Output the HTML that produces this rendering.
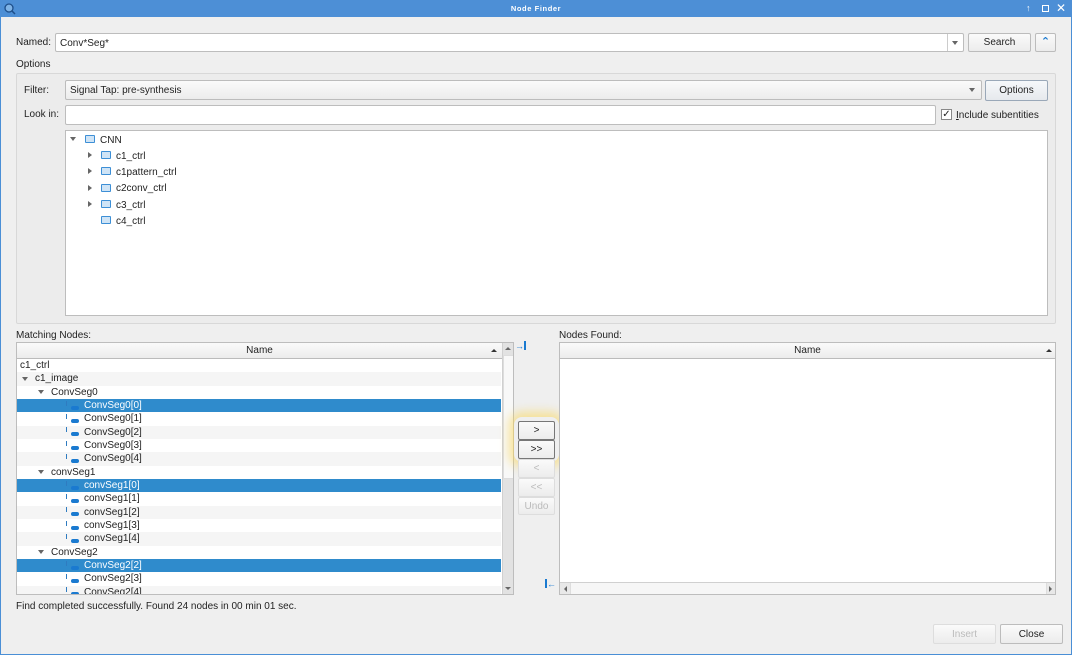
<!DOCTYPE html>
<html><head><meta charset="utf-8"><style>
*{box-sizing:border-box;margin:0;padding:0}
body{width:1072px;height:655px;overflow:hidden;background:#efefef;font-family:"Liberation Sans","DejaVu Sans",sans-serif;font-size:10px;color:#222;position:relative}
.a{position:absolute}
.win{left:0;top:0;width:1072px;height:655px;border:1px solid #4a8fd6;border-top:none}
.title{left:0;top:0;width:1072px;height:17px;background:#4d8fd6;color:#fff;font-size:7.5px;text-align:center;line-height:17px;letter-spacing:.6px;font-weight:bold}
.inp{background:#fff;border:1px solid #bdbdbd;border-radius:2px}
.btn{background:linear-gradient(#fafafa,#ececec);border:1px solid #bcbcbc;border-radius:2px;text-align:center;font-size:10px}
.lbl{white-space:nowrap}
.row{position:absolute;left:1px;width:484px;height:13.3px;line-height:14px;white-space:nowrap;font-size:10px}
.alt{background:#f5f5f5}
.sel{background:#2f8bcc;color:#fff}
.tri{position:absolute;width:0;height:0;border-left:3px solid transparent;border-right:3px solid transparent;border-top:4px solid #666}
.trr{position:absolute;width:0;height:0;border-top:3px solid transparent;border-bottom:3px solid transparent;border-left:4px solid #666}
.ico{position:absolute;width:10px;height:8px;border:1.5px solid #3d8fd6;background:#cfe4f6;border-radius:1px}
.ni{position:absolute}
.ni:before{content:"";position:absolute;left:0;top:0;width:1px;height:5px;background:#2f7bc0}
.ni:after{content:"";position:absolute;left:5px;top:5px;width:8px;height:4px;border-radius:2px;background:#1a7ad0}
</style></head><body>
<div class="a win"></div>
<div class="a title">Node Finder</div>
<svg class="a" style="left:3px;top:2px" width="14" height="13"><circle cx="6" cy="6" r="4" fill="#7fb3e6" stroke="#1e4f8a" stroke-width="1.3"/><line x1="9" y1="9" x2="12" y2="12" stroke="#1e4f8a" stroke-width="1.5"/></svg>
<div class="a" style="left:1026px;top:3px;color:#fff;font-size:9px;font-weight:bold">&#x2191;</div>
<div class="a" style="left:1042px;top:5px;width:7px;height:7px;border:1.5px solid #fff"></div>
<div class="a" style="left:1056px;top:1px;color:#fff;font-size:12px;font-weight:bold">&#x2715;</div>

<div class="a lbl" style="left:16px;top:37px">Named:</div>
<div class="a inp" style="left:55px;top:33px;width:909px;height:19px;padding:4px 4px">Conv*Seg*</div>
<div class="a" style="left:947px;top:34px;width:1px;height:17px;background:#ccc"></div>
<div class="a tri" style="left:952px;top:41px"></div>
<div class="a btn" style="left:968px;top:33px;width:63px;height:19px;line-height:18px">Search</div>
<div class="a btn" style="left:1035px;top:33px;width:21px;height:19px;color:#1a7ad0;font-weight:bold;font-size:11px;line-height:17px">&#x2303;</div>
<div class="a lbl" style="left:16px;top:59px">Options</div>

<div class="a" style="left:16px;top:73px;width:1040px;height:251px;border:1px solid #d8d8d8;border-radius:2px;background:#ececec"></div>
<div class="a lbl" style="left:24px;top:85px">Filter:</div>
<div class="a btn" style="left:65px;top:80px;width:917px;height:20px;text-align:left;padding:4px 4px">Signal Tap: pre-synthesis</div>
<div class="a tri" style="left:969px;top:88px"></div>
<div class="a btn" style="left:985px;top:80px;width:63px;height:21px;line-height:20px;border-color:#9aa8b8;background:linear-gradient(#f6f8fa,#e6e9ed)">Options</div>
<div class="a lbl" style="left:24px;top:109px">Look in:</div>
<div class="a inp" style="left:65px;top:105px;width:871px;height:20px"></div>
<div class="a" style="left:941px;top:109px;width:11px;height:11px;border:1px solid #888;background:#fff;font-size:10px;line-height:9px;text-align:center;font-weight:bold">&#x2713;</div>
<div class="a lbl" style="left:956px;top:110px"><u>I</u>nclude subentities</div>

<div class="a inp" style="left:65px;top:130px;width:983px;height:186px;border-radius:0"></div>
<div class="a tri" style="left:70px;top:137px"></div>
<div class="a ico" style="left:85px;top:135px"></div>
<div class="a lbl" style="left:100px;top:135px">CNN</div>
<div class="a trr" style="left:88px;top:152px"></div><div class="a ico" style="left:101px;top:151px"></div><div class="a lbl" style="left:116px;top:151px">c1_ctrl</div>
<div class="a trr" style="left:88px;top:168px"></div><div class="a ico" style="left:101px;top:167px"></div><div class="a lbl" style="left:116px;top:167px">c1pattern_ctrl</div>
<div class="a trr" style="left:88px;top:185px"></div><div class="a ico" style="left:101px;top:184px"></div><div class="a lbl" style="left:116px;top:183px">c2conv_ctrl</div>
<div class="a trr" style="left:88px;top:201px"></div><div class="a ico" style="left:101px;top:200px"></div><div class="a lbl" style="left:116px;top:200px">c3_ctrl</div>
<div class="a ico" style="left:101px;top:216px"></div><div class="a lbl" style="left:116px;top:216px">c4_ctrl</div>

<div class="a lbl" style="left:16px;top:330px">Matching Nodes:</div>
<div class="a" style="left:16px;top:342px;width:498px;height:253px;border:1px solid #bdbdbd;background:#fff;overflow:hidden">
 <div class="a" style="left:0;top:0;width:485px;height:16px;background:linear-gradient(#fafafa,#ececec);border-bottom:1px solid #bbb;text-align:center;line-height:16px">Name</div>
 <div class="a" style="left:474px;top:6px;border-left:3px solid transparent;border-right:3px solid transparent;border-bottom:3px solid #333"></div>
 <div class="a" style="left:485px;top:0;width:12px;height:252px;background:#e2e2e2;border-left:1px solid #d0d0d0"></div>
 <div class="a" style="left:486px;top:12px;width:11px;height:124px;background:#f8f8f8;border:1px solid #ddd"></div>
 <div class="a" style="left:488px;top:4px;border-left:3px solid transparent;border-right:3px solid transparent;border-bottom:3px solid #666"></div>
 <div class="a" style="left:488px;top:244px;border-left:3px solid transparent;border-right:3px solid transparent;border-top:3px solid #666"></div>
 <div class="row" style="top:16px;left:0;padding-left:3px">c1_ctrl</div>
 <div class="row alt" style="top:29.3px;left:0;padding-left:18px">c1_image</div><div class="tri" style="left:5px;top:34px"></div>
 <div class="row" style="top:42.6px;left:0;padding-left:34px">ConvSeg0</div><div class="tri" style="left:21px;top:47px"></div>
 <div class="row sel" style="top:56px;left:0;padding-left:67px">ConvSeg0[0]</div><div class="ni" style="left:49px;top:58px"></div>
 <div class="row" style="top:69.3px;left:0;padding-left:67px">ConvSeg0[1]</div><div class="ni" style="left:49px;top:71px"></div>
 <div class="row alt" style="top:82.6px;left:0;padding-left:67px">ConvSeg0[2]</div><div class="ni" style="left:49px;top:84px"></div>
 <div class="row" style="top:96px;left:0;padding-left:67px">ConvSeg0[3]</div><div class="ni" style="left:49px;top:98px"></div>
 <div class="row alt" style="top:109.3px;left:0;padding-left:67px">ConvSeg0[4]</div><div class="ni" style="left:49px;top:111px"></div>
 <div class="row" style="top:122.6px;left:0;padding-left:34px">convSeg1</div><div class="tri" style="left:21px;top:127px"></div>
 <div class="row sel" style="top:136px;left:0;padding-left:67px">convSeg1[0]</div><div class="ni" style="left:49px;top:138px"></div>
 <div class="row" style="top:149.3px;left:0;padding-left:67px">convSeg1[1]</div><div class="ni" style="left:49px;top:151px"></div>
 <div class="row alt" style="top:162.6px;left:0;padding-left:67px">convSeg1[2]</div><div class="ni" style="left:49px;top:164px"></div>
 <div class="row" style="top:176px;left:0;padding-left:67px">convSeg1[3]</div><div class="ni" style="left:49px;top:178px"></div>
 <div class="row alt" style="top:189.3px;left:0;padding-left:67px">convSeg1[4]</div><div class="ni" style="left:49px;top:191px"></div>
 <div class="row" style="top:202.6px;left:0;padding-left:34px">ConvSeg2</div><div class="tri" style="left:21px;top:207px"></div>
 <div class="row sel" style="top:216px;left:0;padding-left:67px">ConvSeg2[2]</div><div class="ni" style="left:49px;top:218px"></div>
 <div class="row" style="top:229.3px;left:0;padding-left:67px">ConvSeg2[3]</div><div class="ni" style="left:49px;top:231px"></div>
 <div class="row alt" style="top:242.6px;left:0;padding-left:67px">ConvSeg2[4]</div><div class="ni" style="left:49px;top:244px"></div>
</div>
<div class="a" style="left:515px;top:341px;color:#1a7ad0;font-size:9px;font-weight:bold">&#x2192;<span style="display:inline-block;width:2px;height:9px;background:#1a7ad0;vertical-align:-1px"></span></div>
<div class="a" style="left:545px;top:579px;color:#1a7ad0;font-size:9px;font-weight:bold"><span style="display:inline-block;width:2px;height:9px;background:#1a7ad0;vertical-align:-1px"></span>&#x2190;</div>

<div class="a" style="left:514px;top:417px;width:45px;height:45px;border-radius:8px;box-shadow:0 0 10px 5px rgba(250,215,90,.6)"></div>
<div class="a btn" style="left:518px;top:421px;width:37px;height:19px;line-height:17px;border-color:#777">&gt;</div>
<div class="a btn" style="left:518px;top:440px;width:37px;height:19px;line-height:17px;border-color:#777">&gt;&gt;</div>
<div class="a btn" style="left:518px;top:459px;width:37px;height:19px;line-height:17px;color:#bbb;border-color:#ddd">&lt;</div>
<div class="a btn" style="left:518px;top:478px;width:37px;height:19px;line-height:17px;color:#bbb;border-color:#ddd">&lt;&lt;</div>
<div class="a btn" style="left:518px;top:497px;width:37px;height:18px;line-height:17px;color:#bbb;border-color:#ddd">Undo</div>

<div class="a lbl" style="left:559px;top:330px">Nodes Found:</div>
<div class="a" style="left:559px;top:342px;width:497px;height:253px;border:1px solid #bdbdbd;background:#fff">
 <div class="a" style="left:0;top:0;width:495px;height:16px;background:linear-gradient(#fafafa,#ececec);border-bottom:1px solid #bbb;text-align:center;line-height:16px">Name</div>
 <div class="a" style="left:486px;top:6px;border-left:3px solid transparent;border-right:3px solid transparent;border-bottom:3px solid #333"></div>
 <div class="a" style="left:0;top:239px;width:495px;height:12px;background:#e8e8e8;border-top:1px solid #d0d0d0"></div>
 <div class="a" style="left:10px;top:240px;height:11px;background:#f6f6f6;border-left:1px solid #ddd;border-right:1px solid #ddd;width:477px"></div>
 <div class="a" style="left:4px;top:243px;border-top:3px solid transparent;border-bottom:3px solid transparent;border-right:3px solid #666"></div>
 <div class="a" style="left:489px;top:243px;border-top:3px solid transparent;border-bottom:3px solid transparent;border-left:3px solid #666"></div>
</div>

<div class="a lbl" style="left:16px;top:601px">Find completed successfully. Found 24 nodes in 00 min 01 sec.</div>
<div class="a btn" style="left:933px;top:624px;width:63px;height:20px;line-height:19px;color:#bbb;border-color:#ddd">Insert</div>
<div class="a btn" style="left:1000px;top:624px;width:63px;height:20px;line-height:19px">Close</div>
</body></html>
